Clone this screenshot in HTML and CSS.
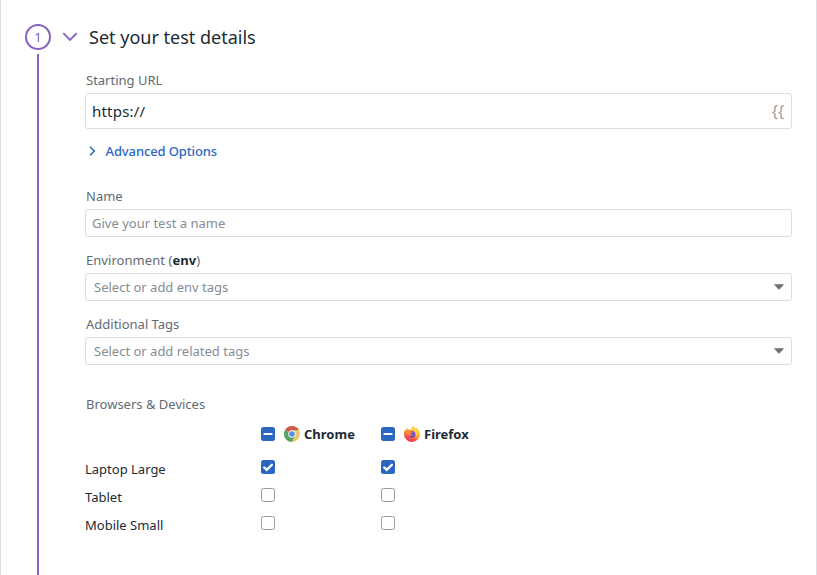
FILE: index.html
```html
<!DOCTYPE html>
<html lang="en">
<head>
<meta charset="utf-8">
<title>Set your test details</title>
<link rel="stylesheet" href="styles.css">
</head>
<body>
<svg class="defs" width="0" height="0" aria-hidden="true">
  <defs>
    <symbol id="minus" viewBox="0 0 14 14"><path d="M3.4 7h7.2" fill="none" stroke="#fff" stroke-width="2" stroke-linecap="round"/></symbol>
    <symbol id="check" viewBox="0 0 14 14"><path d="M3.200 7.500l2.500 2.300L10.900 4.700" fill="none" stroke="#fff" stroke-width="2.300" stroke-linecap="round"/></symbol>
  </defs>
</svg>
<main class="panel">
  <aside class="rail">
    <div class="step">1</div>
    <div class="line"></div>
  </aside>
  <section class="content">
    <header class="head">
      <svg class="chevron" width="16" height="10" viewBox="0 0 16 10"><path d="M1.3 1.2L8 8l6.7-6.8" fill="none" stroke="#8661bd" stroke-width="1.8"/></svg>
      <h1>Set your test details</h1>
    </header>
    <div class="form">
      <div class="label">Starting URL</div>
      <div class="field url"><span>https://</span><span class="braces">{{</span></div>
      <div class="advanced">
        <svg width="7" height="10" viewBox="0 0 7 10"><path d="M1 .8L5.3 5 1 9.2" fill="none" stroke="#2b67c0" stroke-width="1.5"/></svg>
        <span>Advanced Options</span>
      </div>
      <div class="label">Name</div>
      <div class="field">Give your test a name</div>
      <div class="label next env">Environment (<b>env</b>)</div>
      <div class="field select"><span>Select or add env tags</span><svg width="10" height="6" viewBox="0 0 10 6"><path d="M.6.3h8.8q.7 0 .2.6L5.6 5.2q-.6.6-1.2 0L.4.9Q-.1.3.6.3z" fill="#6b747b"/></svg></div>
      <div class="label next">Additional Tags</div>
      <div class="field select"><span>Select or add related tags</span><svg width="10" height="6" viewBox="0 0 10 6"><path d="M.6.3h8.8q.7 0 .2.6L5.6 5.2q-.6.6-1.2 0L.4.9Q-.1.3.6.3z" fill="#6b747b"/></svg></div>
      <div class="label browsers">Browsers &amp; Devices</div>
      <div class="grid titles">
        <span></span>
        <div class="browser">
          <i class="box on"><svg><use href="#minus"/></svg></i>
          <svg class="logo" viewBox="0 0 16 16">
            <path d="M8 8L1.07 4A8 8 0 0 1 14.93 4z" fill="#cd594b"/>
            <path d="M8 8L1.07 4A8 8 0 0 0 8 16l3.5-6z" fill="#58a464"/>
            <path d="M8 8l3.5 2L8 16A8 8 0 0 0 14.93 4.3L8 4.3z" fill="#f3c665"/>
            <circle cx="8" cy="8" r="3.8" fill="#f3f5f7"/>
            <circle cx="8" cy="8" r="2.8" fill="#5b90e8"/>
          </svg>
          <b>Chrome</b>
        </div>
        <div class="browser">
          <i class="box on"><svg><use href="#minus"/></svg></i>
          <svg class="logo" viewBox="0 0 16 16">
            <defs>
              <linearGradient id="flame" x1=".8" y1="0" x2=".3" y2="1"><stop offset="0" stop-color="#ffe84d"/><stop offset=".45" stop-color="#ffb030"/><stop offset=".72" stop-color="#ff5d43"/><stop offset="1" stop-color="#e32a66"/></linearGradient>
              <linearGradient id="globe" x1=".7" y1="0" x2=".4" y2="1"><stop offset="0" stop-color="#a44be0"/><stop offset="1" stop-color="#5547b8"/></linearGradient>
            </defs>
            <path d="M9.2 0c1 .8 1.6 1.8 2.1 2.6.7-.2.8-.5.8-1 2.3 1.5 3.9 4 3.9 6.8A7.9 7.9 0 0 1 8 16a7.9 7.9 0 0 1-8-7.7C0 6.2.6 4.3 1.6 3.1l.6 1L3.2 1.7l1 1.8c1.1-.1 2 .1 2.8.5C7.2 2.3 8 .9 9.2 0z" fill="url(#flame)"/>
            <circle cx="8" cy="8.2" r="3.4" fill="url(#globe)"/>
            <path d="M2.8 4.3c1.7-.8 3.4-.5 4.5.7L8.5 6c-.3.9-1.500.8-1.900 1.500 0 1 1 1.500 2.200 1-.7 1.700-2.700 2-4.100.8C3.400 8.200 2.500 6.300 2.800 4.300z" fill="#ff8a35"/>
            <path d="M9.2 0c1.8 1.5 2.3 4 4 5.800.8 2.200.4 4-.8 5.600.4-3-.6-5-2.600-6.300C7.900 3.800 8 1.300 9.200 0z" fill="#ffd63e"/>
          </svg>
          <b>Firefox</b>
        </div>
      </div>
      <div class="grid"><span class="device">Laptop Large</span><i class="box on"><svg><use href="#check"/></svg></i><i class="box on"><svg><use href="#check"/></svg></i></div>
      <div class="grid"><span class="device">Tablet</span><i class="box"></i><i class="box"></i></div>
      <div class="grid"><span class="device">Mobile Small</span><i class="box"></i><i class="box"></i></div>
    </div>
  </section>
</main>
</body>
</html>
```
FILE: styles.css
```css
* { box-sizing: border-box; }
body {
  margin: 0;
  background: #fff;
  color: #1c2b34;
  font: 13px/16px "Noto Sans", sans-serif;
}
.defs { display: none; }
.panel {
  display: flex;
  height: 575px;
  padding: 24px 24px 0;
  border: solid #dcdce4;
  border-width: 0 1px;
  overflow: hidden;
}
.rail {
  display: flex;
  flex-direction: column;
  align-items: center;
  gap: 4px;
  width: 26px;
}
.step {
  width: 26px;
  height: 26px;
  border: 2px solid #8661bd;
  border-radius: 50%;
  color: #8661bd;
  text-align: center;
  line-height: 22px;
}
.line { flex: 1; width: 2px; background: #8661bd; }
.content { flex: 1; padding-left: 11px; }
.head {
  display: flex;
  align-items: center;
  gap: 11px;
  height: 26px;
}
.head h1 { margin: 0; font-size: 18px; font-weight: 400; line-height: 26px; }
.form { padding: 22px 0 0 23px; }
.label { padding-left: 1px; margin-bottom: 5px; color: #626b73; }
.label b { color: #1c2b34; }
.label.next { margin-top: 15px; }
.label.env { letter-spacing: .05px; }
.field {
  display: flex;
  align-items: center;
  justify-content: space-between;
  height: 28px;
  padding: 0 7px 0 6px;
  border: 1px solid #dcdde2;
  border-radius: 3px;
  color: #878d93;
}
.field.url { height: 36px; color: #1c2b34; font-size: 15px; letter-spacing: .2px; }
.field .braces {
  color: #9a9fa4;
  font-size: 16px;
  letter-spacing: 0;
}
.field.select { padding-left: 8px; }
.advanced {
  display: flex;
  align-items: center;
  gap: 9.5px;
  margin: 14px 0 29px;
  padding-left: 4px;
  color: #2b67c0;
  font-weight: 500;
  letter-spacing: -.12px;
}
.label.browsers { margin: 31px 0 8px; }
.grid {
  display: grid;
  grid-template-columns: 176px 120px 120px;
  align-items: center;
  height: 28px;
}
.grid.titles { margin-bottom: 5px; }
.browser { display: flex; align-items: center; }
.device { padding-top: 3px; }
.box {
  display: block;
  width: 14px;
  height: 14px;
  border: 1px solid #979ca3;
  border-radius: 2.5px;
  background: #fff;
}
.box.on { border: 0; background: #2b67c0; }
.box svg { display: block; width: 14px; height: 14px; }
.logo { width: 16px; height: 16px; margin: 0 4px 0 9px; }
```
